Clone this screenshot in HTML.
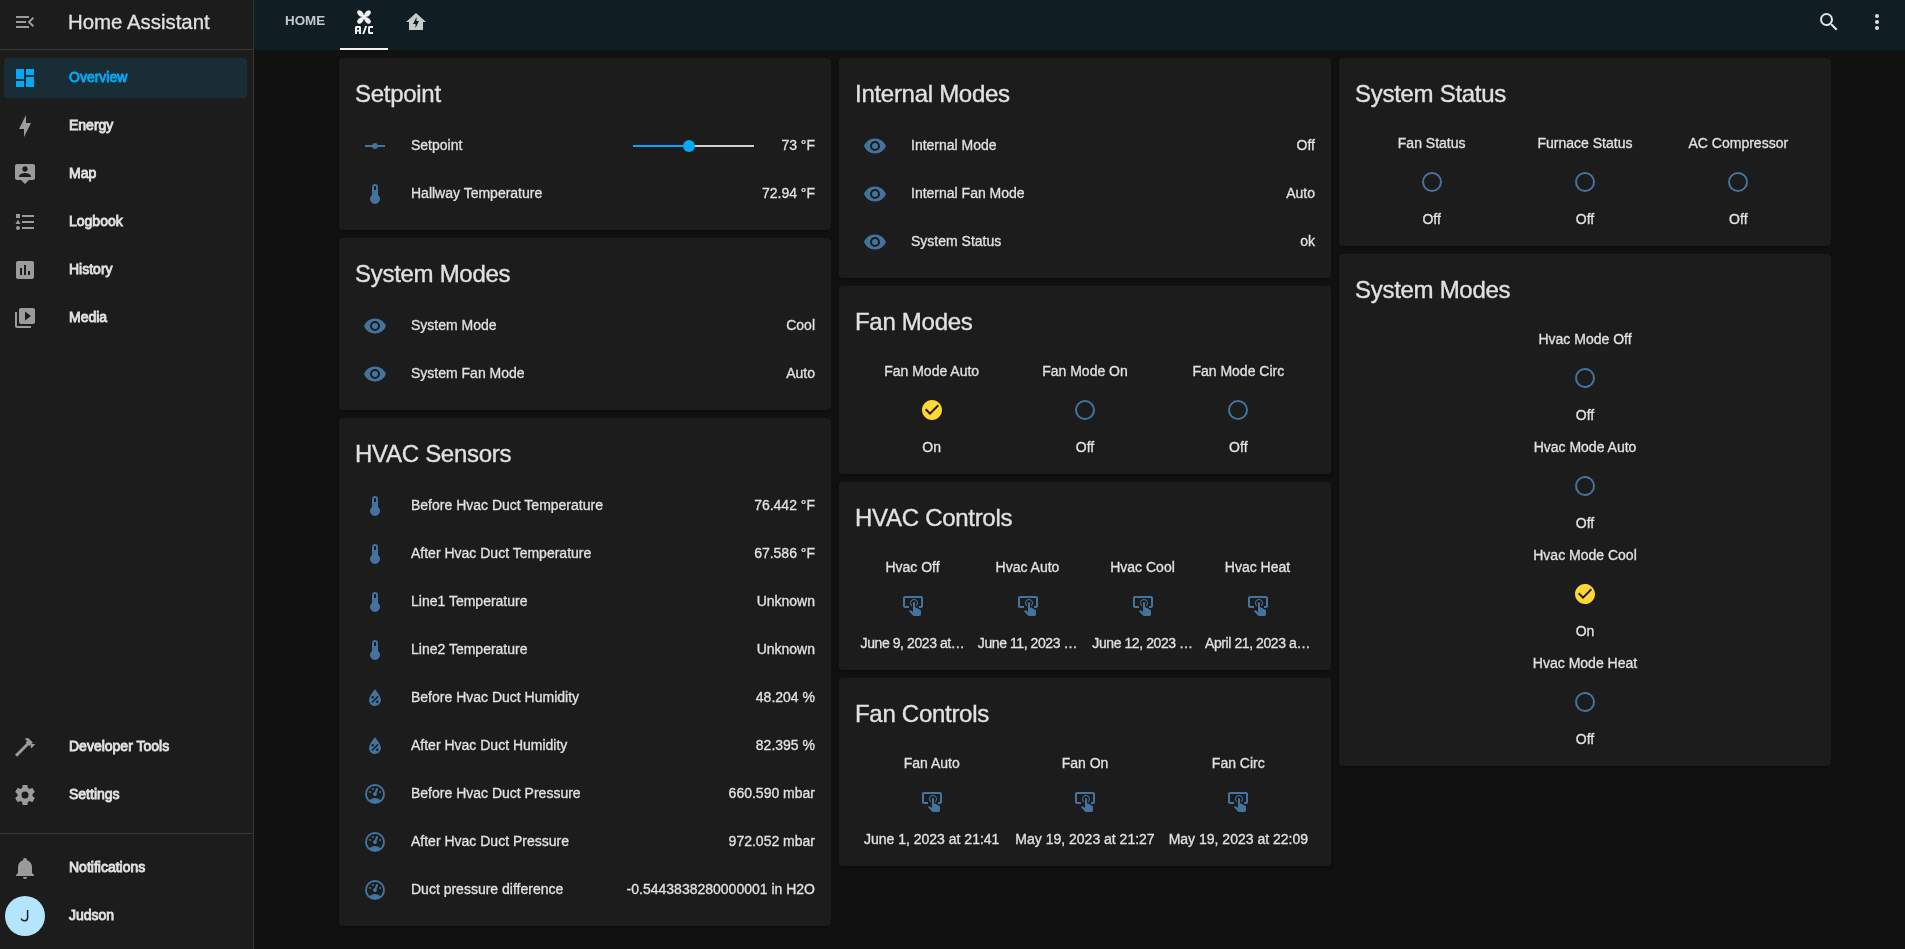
<!DOCTYPE html><html><head><meta charset="utf-8"><style>
*{box-sizing:border-box;margin:0;padding:0}
html,body{width:1905px;height:949px;overflow:hidden;background:#111111;font-family:"Liberation Sans",sans-serif;color:#e1e1e1;-webkit-font-smoothing:antialiased}
.info,.val,.ent div{-webkit-text-stroke:0.3px currentColor}
.ic{display:block;fill:currentColor}
#sidebar,#header,.card{will-change:transform}
#sidebar{position:absolute;left:0;top:0;width:254px;height:949px;background:#1c1c1c;border-right:1px solid #353535}
#sb-menu{position:absolute;left:0;top:0;width:253px;height:50px;border-bottom:1px solid #353535}
#sb-menu .ic{position:absolute;left:13px;top:10px;color:#9b9b9b}
#sb-title{position:absolute;left:68px;top:10px;height:24px;line-height:24px;font-size:20.4px;color:#e1e1e1;white-space:nowrap;-webkit-text-stroke:0.3px currentColor}
.sbi{position:absolute;left:4px;width:243px;height:40px;border-radius:4px}
.sbi .ic{position:absolute;left:9px;top:8px;color:#9b9b9b}
.sbi span{position:absolute;left:65px;top:-1px;line-height:40px;font-size:14px;font-weight:400;color:#e1e1e1;white-space:nowrap;-webkit-text-stroke:0.85px currentColor}
.sbi.sel{background:#192d36}
.sbi.sel .ic,.sbi.sel span{color:#03a9f4}
#sb-div{position:absolute;left:0;top:833px;width:253px;height:1px;background:#353535}
#avatar{position:absolute;left:5px;top:896px;width:40px;height:40px;border-radius:50%;background:#b3e5fc;color:#1c1c1c;text-align:center;line-height:40px;font-size:16px}
#header{position:absolute;left:254px;top:0;width:1651px;height:50px;background:#101e24}
#tab-home{position:absolute;left:31px;top:-1px;height:44px;line-height:44px;font-size:13.4px;font-weight:700;color:#c6c9cb}
#tab-ac{position:absolute;left:98px;top:10px}
#tab-hl{position:absolute;left:150px;top:10px;color:#c8cbcd}
#tab-ul{position:absolute;left:86px;top:48px;width:48px;height:2px;background:#f2f2f2}
#hd-search{position:absolute;left:1563px;top:10px;color:#e1e1e1}
#hd-dots{position:absolute;left:1611px;top:10px;color:#e1e1e1}
.card{position:absolute;width:492px;background:#1c1c1c;border-radius:4px;box-shadow:0 2px 1px -1px rgba(0,0,0,.2),0 1px 1px 0 rgba(0,0,0,.14),0 1px 3px 0 rgba(0,0,0,.12)}
.ch{-webkit-text-stroke:0.35px currentColor;font-size:24px;letter-spacing:-0.012em;line-height:48px;padding:12px 16px 16px;height:76px;white-space:nowrap;color:#e1e1e1}
.states{padding:0 16px 16px;margin-top:-8px}
.row{display:flex;align-items:center;height:40px;margin-bottom:8px}
.row:last-child{margin-bottom:0}
.badge{flex:0 0 40px;width:40px;height:40px;display:flex;align-items:center;justify-content:center;color:#44739e}
.info{position:relative;top:-1px;flex:1 1 30%;padding-left:16px;padding-right:8px;font-size:14px;white-space:nowrap;overflow:hidden;text-overflow:ellipsis}
.val{position:relative;top:-1px;font-size:14px;text-align:right;white-space:nowrap}
.ents{display:flex;flex-wrap:wrap;padding:0 16px 4px}
.ent{padding:0 4px;display:flex;flex-direction:column;align-items:center;margin-bottom:12px}
.ent div{position:relative;top:-1px;width:100%;text-align:center;white-space:nowrap;overflow:hidden;text-overflow:ellipsis;font-size:14px;line-height:20px;height:20px}
.ent .gb{width:40px;height:40px;margin:8px 0;display:flex;align-items:center;justify-content:center;color:#44739e}
.ent .gb.on{color:#fdd835}
.slider{position:absolute}
.tr{letter-spacing:-0.42px}

</style></head><body><div id="sidebar"><div id="sb-menu"><svg class="ic" width="24" height="24" viewBox="0 0 24 24"><path d="M21,15.61L19.59,17L14.58,12L19.59,7L21,8.39L17.44,12L21,15.61M3,6H16V8H3V6M3,13V11H13V13H3M3,18V16H16V18H3Z"/></svg><div id="sb-title">Home Assistant</div></div><div class="sbi sel" style="top:58px"><svg class="ic" width="24" height="24" viewBox="0 0 24 24"><path d="M13,3V9H21V3M13,21H21V11H13M3,21H11V15H3M3,13H11V3H3V13Z"/></svg><span>Overview</span></div><div class="sbi" style="top:106px"><svg class="ic" width="24" height="24" viewBox="0 0 24 24"><path d="M11 15H6L13 1V9H18L11 23V15Z"/></svg><span>Energy</span></div><div class="sbi" style="top:154px"><svg class="ic" width="24" height="24" viewBox="0 0 24 24"><path d="M20,2H4A2,2 0 0,0 2,4V16A2,2 0 0,0 4,18H8L12,22L16,18H20A2,2 0 0,0 22,16V4A2,2 0 0,0 20,2M12,4.3C13.5,4.3 14.7,5.5 14.7,7C14.7,8.5 13.5,9.7 12,9.7C10.5,9.7 9.3,8.5 9.3,7C9.3,5.5 10.5,4.3 12,4.3M18,15H6V14.1C6,12.1 10,11 12,11C14,11 18,12.1 18,14.1V15Z"/></svg><span>Map</span></div><div class="sbi" style="top:202px"><svg class="ic" width="24" height="24" viewBox="0 0 24 24"><path d="M5,9.5L7.5,14H2.5L5,9.5M3,4H7V8H3V4M5,20A2,2 0 0,0 7,18A2,2 0 0,0 5,16A2,2 0 0,0 3,18A2,2 0 0,0 5,20M9,5V7H21V5H9M9,19H21V17H9V19M9,13H21V11H9V13Z"/></svg><span>Logbook</span></div><div class="sbi" style="top:250px"><svg class="ic" width="24" height="24" viewBox="0 0 24 24"><path d="M19 3H5C3.9 3 3 3.9 3 5V19C3 20.1 3.9 21 5 21H19C20.1 21 21 20.1 21 19V5C21 3.9 20.1 3 19 3M9 17H7V10H9V17M13 17H11V7H13V17M17 17H15V13H17V17Z"/></svg><span>History</span></div><div class="sbi" style="top:298px"><svg class="ic" width="24" height="24" viewBox="0 0 24 24"><path d="M4,6H2V20A2,2 0 0,0 4,22H18V20H4M20,2H8A2,2 0 0,0 6,4V16A2,2 0 0,0 8,18H20A2,2 0 0,0 22,16V4A2,2 0 0,0 20,2M12,14.5V5.5L18,10L12,14.5Z"/></svg><span>Media</span></div><div class="sbi" style="top:727px"><svg class="ic" width="24" height="24" viewBox="0 0 24 24"><path d="M2 19.63L13.43 8.2L12.72 7.5L14.14 6.07L12 3.89C13.2 2.7 15.09 2.7 16.27 3.89L19.87 7.5L18.45 8.91H21.29L22 9.62L18.45 13.21L17.74 12.5V9.62L16.27 11.04L15.56 10.33L4.13 21.76L2 19.63Z"/></svg><span>Developer Tools</span></div><div class="sbi" style="top:775px"><svg class="ic" width="24" height="24" viewBox="0 0 24 24"><path d="M12,15.5A3.5,3.5 0 0,1 8.5,12A3.5,3.5 0 0,1 12,8.5A3.5,3.5 0 0,1 15.5,12A3.5,3.5 0 0,1 12,15.5M19.43,12.97C19.47,12.65 19.5,12.33 19.5,12C19.5,11.67 19.47,11.34 19.43,11L21.54,9.37C21.73,9.22 21.78,8.95 21.66,8.73L19.66,5.27C19.54,5.05 19.27,4.96 19.05,5.05L16.56,6.05C16.04,5.66 15.5,5.32 14.87,5.07L14.5,2.42C14.46,2.18 14.25,2 14,2H10C9.75,2 9.54,2.18 9.5,2.42L9.13,5.07C8.5,5.32 7.960,5.66 7.44,6.05L4.95,5.05C4.73,4.96 4.46,5.05 4.34,5.27L2.34,8.73C2.21,8.95 2.27,9.22 2.46,9.37L4.57,11C4.53,11.34 4.5,11.67 4.5,12C4.5,12.33 4.53,12.65 4.57,12.97L2.46,14.63C2.27,14.78 2.21,15.05 2.34,15.27L4.34,18.73C4.46,18.95 4.73,19.03 4.95,18.95L7.44,17.94C7.96,18.34 8.5,18.68 9.13,18.93L9.5,21.58C9.54,21.82 9.75,22 10,22H14C14.25,22 14.46,21.82 14.5,21.58L14.87,18.93C15.5,18.67 16.04,18.34 16.56,17.94L19.05,18.95C19.27,19.03 19.54,18.95 19.66,18.73L21.66,15.27C21.78,15.05 21.73,14.78 21.54,14.63L19.43,12.97Z"/></svg><span>Settings</span></div><div id="sb-div"></div><div class="sbi" style="top:848px"><svg class="ic" width="24" height="24" viewBox="0 0 24 24"><path d="M21,19V20H3V19L5,17V11C5,7.9 7.03,5.17 10,4.29C10,4.19 10,4.1 10,4A2,2 0 0,1 12,2A2,2 0 0,1 14,4C14,4.1 14,4.19 14,4.29C16.97,5.17 19,7.9 19,11V17L21,19M14,21A2,2 0 0,1 12,23A2,2 0 0,1 10,21"/></svg><span>Notifications</span></div><div class="sbi" style="top:896px"><span>Judson</span></div><div id="avatar"><svg width="40" height="40" viewBox="0 0 40 40" style="display:block"><path d="M22.6,13.9V21.6A3.3,3.3 0 0 1 16.2,22.6" fill="none" stroke="#222" stroke-width="1.5"/></svg></div></div><div id="header"><div id="tab-home">HOME</div><div id="tab-ac"><svg class="ic" width="24" height="24" viewBox="0 0 24 24" style="fill:#f0f0f0"><g transform="translate(12 7)"><ellipse cx="-3.6" cy="-3.6" rx="2.5" ry="3.6" transform="rotate(-45 -3.6 -3.6)"/><ellipse cx="3.6" cy="-3.6" rx="2.5" ry="3.6" transform="rotate(45 3.6 -3.6)"/><ellipse cx="-3.6" cy="3.6" rx="2.5" ry="3.6" transform="rotate(45 -3.6 3.6)"/><ellipse cx="3.6" cy="3.6" rx="2.5" ry="3.6" transform="rotate(-45 3.6 3.6)"/><circle r="2.2"/></g><path d="M3,24V17.2L3.8,16H8.2L9,17.2V24H7V21.5H5V24ZM5,19.8H7V18H5Z"/><path d="M10.2,24L13.2,16H15.2L12.2,24Z"/><path d="M16,17.2L16.8,16H21V18H18V22H21V24H16.8L16,22.8Z"/></svg></div><div id="tab-hl"><svg class="ic" width="24" height="24" viewBox="0 0 24 24"><path d="M12 3L2 12H5V20H19V12H22L12 3M11.5 18V14H9L12.5 7V11H15L11.5 18Z"/></svg></div><div id="tab-ul"></div><div id="hd-search"><svg class="ic" width="24" height="24" viewBox="0 0 24 24"><path d="M9.5,3A6.5,6.5 0 0,1 16,9.5C16,11.11 15.41,12.59 14.44,13.73L14.71,14H15.5L20.5,19L19,20.5L14,15.5V14.71L13.73,14.44C12.59,15.41 11.11,16 9.5,16A6.5,6.5 0 0,1 3,9.5A6.5,6.5 0 0,1 9.5,3M9.5,5C7,5 5,7 5,9.5C5,12 7,14 9.5,14C12,14 14,12 14,9.5C14,7 12,5 9.5,5Z"/></svg></div><div id="hd-dots"><svg class="ic" width="24" height="24" viewBox="0 0 24 24"><path d="M12,16A2,2 0 0,1 14,18A2,2 0 0,1 12,20A2,2 0 0,1 10,18A2,2 0 0,1 12,16M12,10A2,2 0 0,1 14,12A2,2 0 0,1 12,14A2,2 0 0,1 10,12A2,2 0 0,1 12,10M12,4A2,2 0 0,1 14,6A2,2 0 0,1 12,8A2,2 0 0,1 10,6A2,2 0 0,1 12,4Z"/></svg></div></div><div class="card" style="left:339px;top:58px"><div class="ch">Setpoint</div><div class="states"><div class="row"><div class="badge"><svg class="ic" width="24" height="24" viewBox="0 0 24 24"><path d="M2,11H9.17C9.58,9.83 10.69,9 12,9C13.31,9 14.42,9.83 14.83,11H22V13H14.83C14.42,14.17 13.31,15 12,15C10.69,15 9.58,14.17 9.17,13H2V11Z"/></svg></div><div class="info">Setpoint</div><div class="val" style="position:relative;width:200px;height:40px"><span style="position:absolute;left:18px;top:20px;width:56px;height:2px;background:#03a9f4"></span><span style="position:absolute;left:74px;top:20px;width:65px;height:2px;background:#d0d0d0"></span><span style="position:absolute;left:68px;top:15px;width:12px;height:12px;border-radius:50%;background:#03a9f4"></span><span style="position:absolute;right:0;top:0;line-height:40px">73 °F</span></div></div><div class="row"><div class="badge"><svg class="ic" width="24" height="24" viewBox="0 0 24 24"><path d="M15 13V5A3 3 0 0 0 9 5V13A5 5 0 1 0 15 13M12 4A1 1 0 0 1 13 5V8H11V5A1 1 0 0 1 12 4Z"/></svg></div><div class="info">Hallway Temperature</div><div class="val">72.94 °F</div></div></div></div><div class="card" style="left:339px;top:238px"><div class="ch">System Modes</div><div class="states"><div class="row"><div class="badge"><svg class="ic" width="24" height="24" viewBox="0 0 24 24"><path d="M12,9A3,3 0 0,0 9,12A3,3 0 0,0 12,15A3,3 0 0,0 15,12A3,3 0 0,0 12,9M12,17A5,5 0 0,1 7,12A5,5 0 0,1 12,7A5,5 0 0,1 17,12A5,5 0 0,1 12,17M12,4.5C7,4.5 2.73,7.61 1,12C2.73,16.39 7,19.5 12,19.5C17,19.5 21.27,16.39 23,12C21.27,7.61 17,4.5 12,4.5Z"/></svg></div><div class="info">System Mode</div><div class="val">Cool</div></div><div class="row"><div class="badge"><svg class="ic" width="24" height="24" viewBox="0 0 24 24"><path d="M12,9A3,3 0 0,0 9,12A3,3 0 0,0 12,15A3,3 0 0,0 15,12A3,3 0 0,0 12,9M12,17A5,5 0 0,1 7,12A5,5 0 0,1 12,7A5,5 0 0,1 17,12A5,5 0 0,1 12,17M12,4.5C7,4.5 2.73,7.61 1,12C2.73,16.39 7,19.5 12,19.5C17,19.5 21.27,16.39 23,12C21.27,7.61 17,4.5 12,4.5Z"/></svg></div><div class="info">System Fan Mode</div><div class="val">Auto</div></div></div></div><div class="card" style="left:339px;top:418px"><div class="ch">HVAC Sensors</div><div class="states"><div class="row"><div class="badge"><svg class="ic" width="24" height="24" viewBox="0 0 24 24"><path d="M15 13V5A3 3 0 0 0 9 5V13A5 5 0 1 0 15 13M12 4A1 1 0 0 1 13 5V8H11V5A1 1 0 0 1 12 4Z"/></svg></div><div class="info">Before Hvac Duct Temperature</div><div class="val">76.442 °F</div></div><div class="row"><div class="badge"><svg class="ic" width="24" height="24" viewBox="0 0 24 24"><path d="M15 13V5A3 3 0 0 0 9 5V13A5 5 0 1 0 15 13M12 4A1 1 0 0 1 13 5V8H11V5A1 1 0 0 1 12 4Z"/></svg></div><div class="info">After Hvac Duct Temperature</div><div class="val">67.586 °F</div></div><div class="row"><div class="badge"><svg class="ic" width="24" height="24" viewBox="0 0 24 24"><path d="M15 13V5A3 3 0 0 0 9 5V13A5 5 0 1 0 15 13M12 4A1 1 0 0 1 13 5V8H11V5A1 1 0 0 1 12 4Z"/></svg></div><div class="info">Line1 Temperature</div><div class="val">Unknown</div></div><div class="row"><div class="badge"><svg class="ic" width="24" height="24" viewBox="0 0 24 24"><path d="M15 13V5A3 3 0 0 0 9 5V13A5 5 0 1 0 15 13M12 4A1 1 0 0 1 13 5V8H11V5A1 1 0 0 1 12 4Z"/></svg></div><div class="info">Line2 Temperature</div><div class="val">Unknown</div></div><div class="row"><div class="badge"><svg class="ic" width="24" height="24" viewBox="0 0 24 24"><path d="M12,3.25C12,3.25 6,10 6,14C6,17.32 8.69,20 12,20A6,6 0 0,0 18,14C18,10 12,3.25 12,3.25M14.47,9.97L15.53,11.03L9.53,17.03L8.47,15.97M9.75,10A1.25,1.25 0 0,1 11,11.25A1.25,1.25 0 0,1 9.75,12.5A1.25,1.25 0 0,1 8.5,11.25A1.25,1.25 0 0,1 9.75,10M14.25,14.5A1.25,1.25 0 0,1 15.5,15.75A1.25,1.25 0 0,1 14.25,17A1.25,1.25 0 0,1 13,15.75A1.25,1.25 0 0,1 14.25,14.5Z"/></svg></div><div class="info">Before Hvac Duct Humidity</div><div class="val">48.204 %</div></div><div class="row"><div class="badge"><svg class="ic" width="24" height="24" viewBox="0 0 24 24"><path d="M12,3.25C12,3.25 6,10 6,14C6,17.32 8.69,20 12,20A6,6 0 0,0 18,14C18,10 12,3.25 12,3.25M14.47,9.97L15.53,11.03L9.53,17.03L8.47,15.97M9.75,10A1.25,1.25 0 0,1 11,11.25A1.25,1.25 0 0,1 9.75,12.5A1.25,1.25 0 0,1 8.5,11.25A1.25,1.25 0 0,1 9.75,10M14.25,14.5A1.25,1.25 0 0,1 15.5,15.75A1.25,1.25 0 0,1 14.25,17A1.25,1.25 0 0,1 13,15.75A1.25,1.25 0 0,1 14.25,14.5Z"/></svg></div><div class="info">After Hvac Duct Humidity</div><div class="val">82.395 %</div></div><div class="row"><div class="badge"><svg class="ic" width="24" height="24" viewBox="0 0 24 24"><path d="M12,2A10,10 0 0,0 2,12A10,10 0 0,0 12,22A10,10 0 0,0 22,12A10,10 0 0,0 12,2M12,4A8,8 0 0,1 20,12C20,14.4 19,16.5 17.3,18C15.9,16.7 14,16 12,16C10,16 8.2,16.7 6.7,18C5,16.5 4,14.4 4,12A8,8 0 0,1 12,4M14,5.89C13.62,5.9 13.26,6.15 13.1,6.54L11.81,9.77L11.71,10C11,10.13 10.41,10.6 10.14,11.26C9.73,12.29 10.23,13.45 11.26,13.86C12.29,14.27 13.45,13.77 13.86,12.74C14.12,12.08 14,11.32 13.57,10.76L13.67,10.5L14.96,7.29L14.97,7.26C15.17,6.75 14.92,6.17 14.41,5.96C14.28,5.91 14.15,5.89 14,5.89M10,6A1,1 0 0,0 9,7A1,1 0 0,0 10,8A1,1 0 0,0 11,7A1,1 0 0,0 10,6M7,9A1,1 0 0,0 6,10A1,1 0 0,0 7,11A1,1 0 0,0 8,10A1,1 0 0,0 7,9M17,9A1,1 0 0,0 16,10A1,1 0 0,0 17,11A1,1 0 0,0 18,10A1,1 0 0,0 17,9Z"/></svg></div><div class="info">Before Hvac Duct Pressure</div><div class="val">660.590 mbar</div></div><div class="row"><div class="badge"><svg class="ic" width="24" height="24" viewBox="0 0 24 24"><path d="M12,2A10,10 0 0,0 2,12A10,10 0 0,0 12,22A10,10 0 0,0 22,12A10,10 0 0,0 12,2M12,4A8,8 0 0,1 20,12C20,14.4 19,16.5 17.3,18C15.9,16.7 14,16 12,16C10,16 8.2,16.7 6.7,18C5,16.5 4,14.4 4,12A8,8 0 0,1 12,4M14,5.89C13.62,5.9 13.26,6.15 13.1,6.54L11.81,9.77L11.71,10C11,10.13 10.41,10.6 10.14,11.26C9.73,12.29 10.23,13.45 11.26,13.86C12.29,14.27 13.45,13.77 13.86,12.74C14.12,12.08 14,11.32 13.57,10.76L13.67,10.5L14.96,7.29L14.97,7.26C15.17,6.75 14.92,6.17 14.41,5.96C14.28,5.91 14.15,5.89 14,5.89M10,6A1,1 0 0,0 9,7A1,1 0 0,0 10,8A1,1 0 0,0 11,7A1,1 0 0,0 10,6M7,9A1,1 0 0,0 6,10A1,1 0 0,0 7,11A1,1 0 0,0 8,10A1,1 0 0,0 7,9M17,9A1,1 0 0,0 16,10A1,1 0 0,0 17,11A1,1 0 0,0 18,10A1,1 0 0,0 17,9Z"/></svg></div><div class="info">After Hvac Duct Pressure</div><div class="val">972.052 mbar</div></div><div class="row"><div class="badge"><svg class="ic" width="24" height="24" viewBox="0 0 24 24"><path d="M12,2A10,10 0 0,0 2,12A10,10 0 0,0 12,22A10,10 0 0,0 22,12A10,10 0 0,0 12,2M12,4A8,8 0 0,1 20,12C20,14.4 19,16.5 17.3,18C15.9,16.7 14,16 12,16C10,16 8.2,16.7 6.7,18C5,16.5 4,14.4 4,12A8,8 0 0,1 12,4M14,5.89C13.62,5.9 13.26,6.15 13.1,6.54L11.81,9.77L11.71,10C11,10.13 10.41,10.6 10.14,11.26C9.73,12.29 10.23,13.45 11.26,13.86C12.29,14.27 13.45,13.77 13.86,12.74C14.12,12.08 14,11.32 13.57,10.76L13.67,10.5L14.96,7.29L14.97,7.26C15.17,6.75 14.92,6.17 14.41,5.96C14.28,5.91 14.15,5.89 14,5.89M10,6A1,1 0 0,0 9,7A1,1 0 0,0 10,8A1,1 0 0,0 11,7A1,1 0 0,0 10,6M7,9A1,1 0 0,0 6,10A1,1 0 0,0 7,11A1,1 0 0,0 8,10A1,1 0 0,0 7,9M17,9A1,1 0 0,0 16,10A1,1 0 0,0 17,11A1,1 0 0,0 18,10A1,1 0 0,0 17,9Z"/></svg></div><div class="info">Duct pressure difference</div><div class="val">-0.5443838280000001 in H2O</div></div></div></div><div class="card" style="left:839px;top:58px"><div class="ch">Internal Modes</div><div class="states"><div class="row"><div class="badge"><svg class="ic" width="24" height="24" viewBox="0 0 24 24"><path d="M12,9A3,3 0 0,0 9,12A3,3 0 0,0 12,15A3,3 0 0,0 15,12A3,3 0 0,0 12,9M12,17A5,5 0 0,1 7,12A5,5 0 0,1 12,7A5,5 0 0,1 17,12A5,5 0 0,1 12,17M12,4.5C7,4.5 2.73,7.61 1,12C2.73,16.39 7,19.5 12,19.5C17,19.5 21.27,16.39 23,12C21.27,7.61 17,4.5 12,4.5Z"/></svg></div><div class="info">Internal Mode</div><div class="val">Off</div></div><div class="row"><div class="badge"><svg class="ic" width="24" height="24" viewBox="0 0 24 24"><path d="M12,9A3,3 0 0,0 9,12A3,3 0 0,0 12,15A3,3 0 0,0 15,12A3,3 0 0,0 12,9M12,17A5,5 0 0,1 7,12A5,5 0 0,1 12,7A5,5 0 0,1 17,12A5,5 0 0,1 12,17M12,4.5C7,4.5 2.73,7.61 1,12C2.73,16.39 7,19.5 12,19.5C17,19.5 21.27,16.39 23,12C21.27,7.61 17,4.5 12,4.5Z"/></svg></div><div class="info">Internal Fan Mode</div><div class="val">Auto</div></div><div class="row"><div class="badge"><svg class="ic" width="24" height="24" viewBox="0 0 24 24"><path d="M12,9A3,3 0 0,0 9,12A3,3 0 0,0 12,15A3,3 0 0,0 15,12A3,3 0 0,0 12,9M12,17A5,5 0 0,1 7,12A5,5 0 0,1 12,7A5,5 0 0,1 17,12A5,5 0 0,1 12,17M12,4.5C7,4.5 2.73,7.61 1,12C2.73,16.39 7,19.5 12,19.5C17,19.5 21.27,16.39 23,12C21.27,7.61 17,4.5 12,4.5Z"/></svg></div><div class="info">System Status</div><div class="val">ok</div></div></div></div><div class="card" style="left:839px;top:286px"><div class="ch">Fan Modes</div><div class="ents"><div class="ent" style="width:153.33333333333334px"><div>Fan Mode Auto</div><span class="gb on"><svg class="ic" width="24" height="24" viewBox="0 0 24 24"><path d="M12 2C6.5 2 2 6.5 2 12S6.5 22 12 22 22 17.5 22 12 17.5 2 12 2M10 17L5 12L6.41 10.59L10 14.17L17.59 6.58L19 8L10 17Z"/></svg></span><div>On</div></div><div class="ent" style="width:153.33333333333334px"><div>Fan Mode On</div><span class="gb"><svg class="ic" width="24" height="24" viewBox="0 0 24 24"><path d="M12,20A8,8 0 0,1 4,12A8,8 0 0,1 12,4A8,8 0 0,1 20,12A8,8 0 0,1 12,20M12,2A10,10 0 0,0 2,12A10,10 0 0,0 12,22A10,10 0 0,0 22,12A10,10 0 0,0 12,2Z"/></svg></span><div>Off</div></div><div class="ent" style="width:153.33333333333334px"><div>Fan Mode Circ</div><span class="gb"><svg class="ic" width="24" height="24" viewBox="0 0 24 24"><path d="M12,20A8,8 0 0,1 4,12A8,8 0 0,1 12,4A8,8 0 0,1 20,12A8,8 0 0,1 12,20M12,2A10,10 0 0,0 2,12A10,10 0 0,0 12,22A10,10 0 0,0 22,12A10,10 0 0,0 12,2Z"/></svg></span><div>Off</div></div></div></div><div class="card" style="left:839px;top:482px"><div class="ch">HVAC Controls</div><div class="ents"><div class="ent" style="width:115.0px"><div>Hvac Off</div><span class="gb"><svg class="ic" width="24" height="24" viewBox="0 0 24 24"><path d="M13 5C15.21 5 17 6.79 17 9C17 10.5 16.2 11.77 15 12.46V11.24C15.61 10.69 16 9.89 16 9C16 7.34 14.66 6 13 6S10 7.34 10 9C10 9.89 10.39 10.69 11 11.24V12.46C9.8 11.77 9 10.5 9 9C9 6.79 10.79 5 13 5M20 20.5C19.97 21.32 19.32 21.97 18.5 22H13C12.62 22 12.26 21.85 12 21.57L8 17.37L8.74 16.6C8.93 16.39 9.2 16.28 9.5 16.28H9.7L12 18V9C12 8.45 12.45 8 13 8S14 8.45 14 9V13.47L15.21 13.6L19.15 15.79C19.68 16.03 20 16.56 20 17.14V20.5M20 2H4C2.9 2 2 2.9 2 4V12C2 13.11 2.9 14 4 14H8V12L4 12L4 4H20L20 12H18V14H20V13.96L20.04 14C21.13 14 22 13.09 22 12V4C22 2.9 21.11 2 20 2Z"/></svg></span><div><span class=tr>June 9, 2023 at…</span></div></div><div class="ent" style="width:115.0px"><div>Hvac Auto</div><span class="gb"><svg class="ic" width="24" height="24" viewBox="0 0 24 24"><path d="M13 5C15.21 5 17 6.79 17 9C17 10.5 16.2 11.77 15 12.46V11.24C15.61 10.69 16 9.89 16 9C16 7.34 14.66 6 13 6S10 7.34 10 9C10 9.89 10.39 10.69 11 11.24V12.46C9.8 11.77 9 10.5 9 9C9 6.79 10.79 5 13 5M20 20.5C19.97 21.32 19.32 21.97 18.5 22H13C12.62 22 12.26 21.85 12 21.57L8 17.37L8.74 16.6C8.93 16.39 9.2 16.28 9.5 16.28H9.7L12 18V9C12 8.45 12.45 8 13 8S14 8.45 14 9V13.47L15.21 13.6L19.15 15.79C19.68 16.03 20 16.56 20 17.14V20.5M20 2H4C2.9 2 2 2.9 2 4V12C2 13.11 2.9 14 4 14H8V12L4 12L4 4H20L20 12H18V14H20V13.96L20.04 14C21.13 14 22 13.09 22 12V4C22 2.9 21.11 2 20 2Z"/></svg></span><div><span class=tr>June 11, 2023 …</span></div></div><div class="ent" style="width:115.0px"><div>Hvac Cool</div><span class="gb"><svg class="ic" width="24" height="24" viewBox="0 0 24 24"><path d="M13 5C15.21 5 17 6.79 17 9C17 10.5 16.2 11.77 15 12.46V11.24C15.61 10.69 16 9.89 16 9C16 7.34 14.66 6 13 6S10 7.34 10 9C10 9.89 10.39 10.69 11 11.24V12.46C9.8 11.77 9 10.5 9 9C9 6.79 10.79 5 13 5M20 20.5C19.97 21.32 19.32 21.97 18.5 22H13C12.62 22 12.26 21.85 12 21.57L8 17.37L8.74 16.6C8.93 16.39 9.2 16.28 9.5 16.28H9.7L12 18V9C12 8.45 12.45 8 13 8S14 8.45 14 9V13.47L15.21 13.6L19.15 15.79C19.68 16.03 20 16.56 20 17.14V20.5M20 2H4C2.9 2 2 2.9 2 4V12C2 13.11 2.9 14 4 14H8V12L4 12L4 4H20L20 12H18V14H20V13.96L20.04 14C21.13 14 22 13.09 22 12V4C22 2.9 21.11 2 20 2Z"/></svg></span><div><span class=tr>June 12, 2023 …</span></div></div><div class="ent" style="width:115.0px"><div>Hvac Heat</div><span class="gb"><svg class="ic" width="24" height="24" viewBox="0 0 24 24"><path d="M13 5C15.21 5 17 6.79 17 9C17 10.5 16.2 11.77 15 12.46V11.24C15.61 10.69 16 9.89 16 9C16 7.34 14.66 6 13 6S10 7.34 10 9C10 9.89 10.39 10.69 11 11.24V12.46C9.8 11.77 9 10.5 9 9C9 6.79 10.79 5 13 5M20 20.5C19.97 21.32 19.32 21.97 18.5 22H13C12.62 22 12.26 21.85 12 21.57L8 17.37L8.74 16.6C8.93 16.39 9.2 16.28 9.5 16.28H9.7L12 18V9C12 8.45 12.45 8 13 8S14 8.45 14 9V13.47L15.21 13.6L19.15 15.79C19.68 16.03 20 16.56 20 17.14V20.5M20 2H4C2.9 2 2 2.9 2 4V12C2 13.11 2.9 14 4 14H8V12L4 12L4 4H20L20 12H18V14H20V13.96L20.04 14C21.13 14 22 13.09 22 12V4C22 2.9 21.11 2 20 2Z"/></svg></span><div><span class=tr>April 21, 2023 a…</span></div></div></div></div><div class="card" style="left:839px;top:678px"><div class="ch">Fan Controls</div><div class="ents"><div class="ent" style="width:153.33333333333334px"><div>Fan Auto</div><span class="gb"><svg class="ic" width="24" height="24" viewBox="0 0 24 24"><path d="M13 5C15.21 5 17 6.79 17 9C17 10.5 16.2 11.77 15 12.46V11.24C15.61 10.69 16 9.89 16 9C16 7.34 14.66 6 13 6S10 7.34 10 9C10 9.89 10.39 10.69 11 11.24V12.46C9.8 11.77 9 10.5 9 9C9 6.79 10.79 5 13 5M20 20.5C19.97 21.32 19.32 21.97 18.5 22H13C12.62 22 12.26 21.85 12 21.57L8 17.37L8.74 16.6C8.93 16.39 9.2 16.28 9.5 16.28H9.7L12 18V9C12 8.45 12.45 8 13 8S14 8.45 14 9V13.47L15.21 13.6L19.15 15.79C19.68 16.03 20 16.56 20 17.14V20.5M20 2H4C2.9 2 2 2.9 2 4V12C2 13.11 2.9 14 4 14H8V12L4 12L4 4H20L20 12H18V14H20V13.96L20.04 14C21.13 14 22 13.09 22 12V4C22 2.9 21.11 2 20 2Z"/></svg></span><div>June 1, 2023 at 21:41</div></div><div class="ent" style="width:153.33333333333334px"><div>Fan On</div><span class="gb"><svg class="ic" width="24" height="24" viewBox="0 0 24 24"><path d="M13 5C15.21 5 17 6.79 17 9C17 10.5 16.2 11.77 15 12.46V11.24C15.61 10.69 16 9.89 16 9C16 7.34 14.66 6 13 6S10 7.34 10 9C10 9.89 10.39 10.69 11 11.24V12.46C9.8 11.77 9 10.5 9 9C9 6.79 10.79 5 13 5M20 20.5C19.97 21.32 19.32 21.97 18.5 22H13C12.62 22 12.26 21.85 12 21.57L8 17.37L8.74 16.6C8.93 16.39 9.2 16.28 9.5 16.28H9.7L12 18V9C12 8.45 12.45 8 13 8S14 8.45 14 9V13.47L15.21 13.6L19.15 15.79C19.68 16.03 20 16.56 20 17.14V20.5M20 2H4C2.9 2 2 2.9 2 4V12C2 13.11 2.9 14 4 14H8V12L4 12L4 4H20L20 12H18V14H20V13.96L20.04 14C21.13 14 22 13.09 22 12V4C22 2.9 21.11 2 20 2Z"/></svg></span><div>May 19, 2023 at 21:27</div></div><div class="ent" style="width:153.33333333333334px"><div>Fan Circ</div><span class="gb"><svg class="ic" width="24" height="24" viewBox="0 0 24 24"><path d="M13 5C15.21 5 17 6.79 17 9C17 10.5 16.2 11.77 15 12.46V11.24C15.61 10.69 16 9.89 16 9C16 7.34 14.66 6 13 6S10 7.34 10 9C10 9.89 10.39 10.69 11 11.24V12.46C9.8 11.77 9 10.5 9 9C9 6.79 10.79 5 13 5M20 20.5C19.97 21.32 19.32 21.97 18.5 22H13C12.62 22 12.26 21.85 12 21.57L8 17.37L8.74 16.6C8.93 16.39 9.2 16.28 9.5 16.28H9.7L12 18V9C12 8.45 12.45 8 13 8S14 8.45 14 9V13.47L15.21 13.6L19.15 15.79C19.68 16.03 20 16.56 20 17.14V20.5M20 2H4C2.9 2 2 2.9 2 4V12C2 13.11 2.9 14 4 14H8V12L4 12L4 4H20L20 12H18V14H20V13.96L20.04 14C21.13 14 22 13.09 22 12V4C22 2.9 21.11 2 20 2Z"/></svg></span><div>May 19, 2023 at 22:09</div></div></div></div><div class="card" style="left:1339px;top:58px"><div class="ch">System Status</div><div class="ents"><div class="ent" style="width:153.33333333333334px"><div>Fan Status</div><span class="gb"><svg class="ic" width="24" height="24" viewBox="0 0 24 24"><path d="M12,20A8,8 0 0,1 4,12A8,8 0 0,1 12,4A8,8 0 0,1 20,12A8,8 0 0,1 12,20M12,2A10,10 0 0,0 2,12A10,10 0 0,0 12,22A10,10 0 0,0 22,12A10,10 0 0,0 12,2Z"/></svg></span><div>Off</div></div><div class="ent" style="width:153.33333333333334px"><div>Furnace Status</div><span class="gb"><svg class="ic" width="24" height="24" viewBox="0 0 24 24"><path d="M12,20A8,8 0 0,1 4,12A8,8 0 0,1 12,4A8,8 0 0,1 20,12A8,8 0 0,1 12,20M12,2A10,10 0 0,0 2,12A10,10 0 0,0 12,22A10,10 0 0,0 22,12A10,10 0 0,0 12,2Z"/></svg></span><div>Off</div></div><div class="ent" style="width:153.33333333333334px"><div>AC Compressor</div><span class="gb"><svg class="ic" width="24" height="24" viewBox="0 0 24 24"><path d="M12,20A8,8 0 0,1 4,12A8,8 0 0,1 12,4A8,8 0 0,1 20,12A8,8 0 0,1 12,20M12,2A10,10 0 0,0 2,12A10,10 0 0,0 12,22A10,10 0 0,0 22,12A10,10 0 0,0 12,2Z"/></svg></span><div>Off</div></div></div></div><div class="card" style="left:1339px;top:254px"><div class="ch">System Modes</div><div class="ents"><div class="ent" style="width:460.0px"><div>Hvac Mode Off</div><span class="gb"><svg class="ic" width="24" height="24" viewBox="0 0 24 24"><path d="M12,20A8,8 0 0,1 4,12A8,8 0 0,1 12,4A8,8 0 0,1 20,12A8,8 0 0,1 12,20M12,2A10,10 0 0,0 2,12A10,10 0 0,0 12,22A10,10 0 0,0 22,12A10,10 0 0,0 12,2Z"/></svg></span><div>Off</div></div><div class="ent" style="width:460.0px"><div>Hvac Mode Auto</div><span class="gb"><svg class="ic" width="24" height="24" viewBox="0 0 24 24"><path d="M12,20A8,8 0 0,1 4,12A8,8 0 0,1 12,4A8,8 0 0,1 20,12A8,8 0 0,1 12,20M12,2A10,10 0 0,0 2,12A10,10 0 0,0 12,22A10,10 0 0,0 22,12A10,10 0 0,0 12,2Z"/></svg></span><div>Off</div></div><div class="ent" style="width:460.0px"><div>Hvac Mode Cool</div><span class="gb on"><svg class="ic" width="24" height="24" viewBox="0 0 24 24"><path d="M12 2C6.5 2 2 6.5 2 12S6.5 22 12 22 22 17.5 22 12 17.5 2 12 2M10 17L5 12L6.41 10.59L10 14.17L17.59 6.58L19 8L10 17Z"/></svg></span><div>On</div></div><div class="ent" style="width:460.0px"><div>Hvac Mode Heat</div><span class="gb"><svg class="ic" width="24" height="24" viewBox="0 0 24 24"><path d="M12,20A8,8 0 0,1 4,12A8,8 0 0,1 12,4A8,8 0 0,1 20,12A8,8 0 0,1 12,20M12,2A10,10 0 0,0 2,12A10,10 0 0,0 12,22A10,10 0 0,0 22,12A10,10 0 0,0 12,2Z"/></svg></span><div>Off</div></div></div></div></body></html>
